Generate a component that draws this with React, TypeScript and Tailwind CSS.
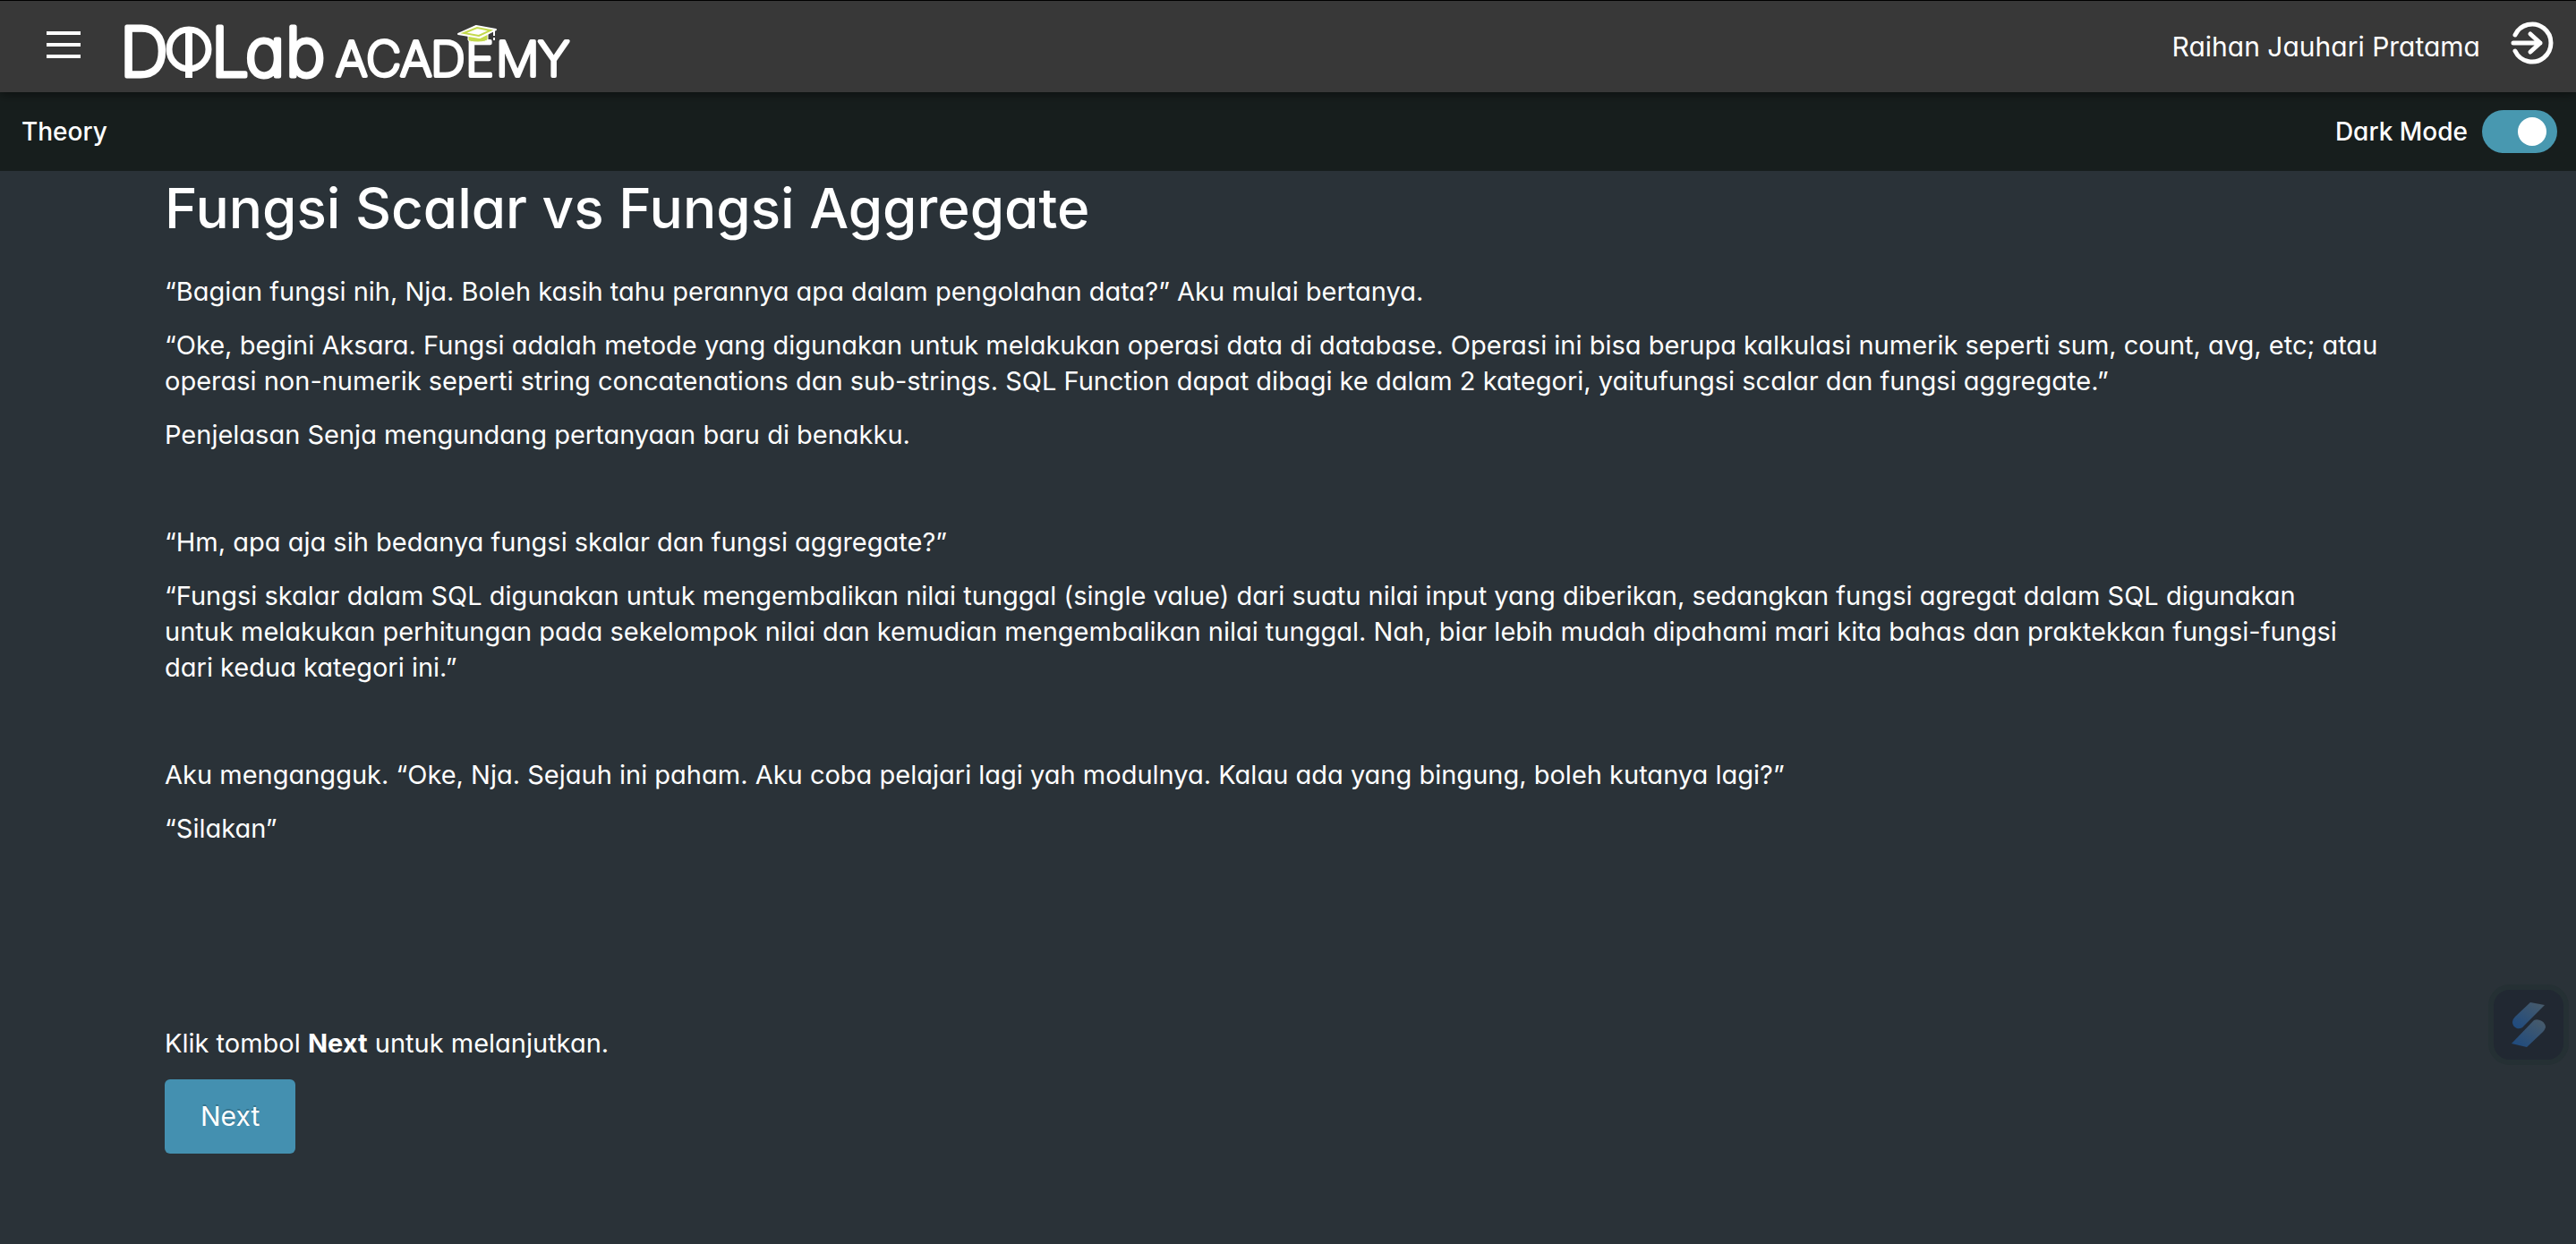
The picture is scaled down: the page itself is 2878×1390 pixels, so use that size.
import { useState } from "react";

function Logo() {
  return (
    <svg className="h-[102px] w-[520px]" viewBox="130 1 520 102" role="img" aria-label="DQLab Academy">
      <g
        className="font-['Inter',sans-serif] font-extralight [font-feature-settings:'cv11']"
        fill="#fff"
        stroke="#fff"
        strokeLinejoin="round"
      >
        <text x="134 236 274 319" y="85" fontSize="75" strokeWidth="5">
          DLab
        </text>
        <text x="375 409 447 481 520 554 601" y="85" fontSize="54" strokeWidth="4">
          ACADEMY
        </text>
      </g>
      <g fill="none" stroke="#fff">
        <circle cx="211" cy="55" r="22" strokeWidth="7" />
        <path d="M211 32V87" strokeWidth="8" />
      </g>
      <path d="M523 39v6q2 2 11 2t11-3v-7l-10 5z" fill="#c3d94c" stroke="#fff" strokeWidth="1" />
      <path d="M512 38L532 29L554 33L536 42Z" fill="#fff" stroke="#fff" strokeWidth="2" strokeLinejoin="round" />
      <path d="M518 37L533 31L548 34L535 40Z" fill="#fff" stroke="#c3d94c" strokeWidth="2" />
      <path d="M552 34v6M552 42v3" stroke="#fff" strokeWidth="2" />
    </svg>
  );
}

function LogoutIcon() {
  return (
    <svg
      className="size-12"
      viewBox="0 0 48 48"
      fill="none"
      stroke="#fff"
      strokeWidth="5"
      strokeLinecap="round"
      strokeLinejoin="round"
      aria-hidden="true"
    >
      <path d="M5 15A21 21 0 1 1 5 33" />
      <path d="M3 24H33M22 14L33 24L22 34" />
    </svg>
  );
}

function WidgetIcon() {
  return (
    <svg className="h-[50px] w-[38px]" viewBox="0 0 38 50" aria-hidden="true">
      <defs>
        <linearGradient id="blade" x1="1" y1="0" x2="0.2" y2="1">
          <stop offset="0" stopColor="#4a5c6a" />
          <stop offset="1" stopColor="#204b7e" />
        </linearGradient>
      </defs>
      <path d="M21 0L37 3L14 26Q11 30 6 29Q1 27 1 22Q1 19 4 16Z" fill="url(#blade)" />
      <path d="M17 50L0 46L25 20Q29 18 34 21Q38 24 38 28Q37 31 35 33Z" fill="url(#blade)" />
    </svg>
  );
}

export default function App() {
  const [dark, setDark] = useState(true);

  return (
    <div className="min-h-screen bg-[#2a3238] font-['Inter','Open_Sans',sans-serif] text-[29px] leading-10 text-white [font-feature-settings:'cv11']">
      <header className="relative flex h-[103px] items-center border-t border-black bg-[#383838] pr-[25px] pl-[52px] shadow-[0_2px_12px_rgba(0,0,0,0.5)]">
        <button type="button" aria-label="Menu" className="mr-10 mb-1 flex flex-col gap-[9px]">
          <span className="h-1 w-[38px] bg-white" />
          <span className="h-1 w-[38px] bg-white" />
          <span className="h-1 w-[38px] bg-white" />
        </button>
        <a href="#">
          <Logo />
        </a>
        <span className="mr-[34px] ml-auto text-[30px]">Raihan Jauhari Pratama</span>
        <button type="button" aria-label="Log out" className="mb-2">
          <LogoutIcon />
        </button>
      </header>

      <div className="flex h-[88px] items-center justify-between bg-[#171e1d] pr-[21px] pl-6 text-[28px] font-medium">
        <span>Theory</span>
        <label className="flex cursor-pointer items-center gap-4">
          Dark Mode
          <input
            type="checkbox"
            checked={dark}
            onChange={(e) => setDark(e.target.checked)}
            className="h-12 w-[84px] appearance-none rounded-full bg-gray-400 p-2 before:block before:size-8 before:rounded-full before:bg-white checked:bg-[#4898b0] checked:before:ml-8"
          />
        </label>
      </div>

      <main className="flex flex-col gap-5 px-[184px] pt-2 pb-20">
        <h1 className="mb-5 text-[62px] leading-[67px] font-medium">Fungsi Scalar vs Fungsi Aggregate</h1>
        <p>“Bagian fungsi nih, Nja. Boleh kasih tahu perannya apa dalam pengolahan data?” Aku mulai bertanya.</p>
        <p>
          “Oke, begini Aksara. Fungsi adalah metode yang digunakan untuk melakukan operasi data di database. Operasi ini
          bisa berupa kalkulasi numerik seperti sum, count, avg, etc; atau operasi non-numerik seperti string
          concatenations dan sub-strings. SQL Function dapat dibagi ke dalam 2 kategori, yaitufungsi scalar dan fungsi
          aggregate.”
        </p>
        <p>Penjelasan Senja mengundang pertanyaan baru di benakku.</p>
        <p className="mt-[60px]">“Hm, apa aja sih bedanya fungsi skalar dan fungsi aggregate?”</p>
        <p>
          “Fungsi skalar dalam SQL digunakan untuk mengembalikan nilai tunggal (single value) dari suatu nilai input
          yang diberikan, sedangkan fungsi agregat dalam SQL digunakan
          <br />
          untuk melakukan perhitungan pada sekelompok nilai dan kemudian mengembalikan nilai tunggal. Nah, biar lebih
          mudah dipahami mari kita bahas dan praktekkan fungsi-fungsi
          <br />
          dari kedua kategori ini.”
        </p>
        <p className="mt-[60px]">
          Aku mengangguk. “Oke, Nja. Sejauh ini paham. Aku coba pelajari lagi yah modulnya. Kalau ada yang bingung,
          boleh kutanya lagi?”
        </p>
        <p>“Silakan”</p>
        <p className="mt-[180px]">
          Klik tombol <strong>Next</strong> untuk melanjutkan.
        </p>
        <button
          type="button"
          className="h-[83px] self-start rounded-md bg-[#4490b0] px-10 pb-0.5 text-[30px] [text-shadow:0_-2px_0_rgba(0,0,0,0.2)]"
        >
          Next
        </button>
      </main>

      <button
        type="button"
        aria-label="Open assistant"
        className="fixed right-2 bottom-[200px] flex size-[90px] items-center justify-center rounded-3xl border-[6px] border-[#253034] bg-[#212832]"
      >
        <WidgetIcon />
      </button>
    </div>
  );
}
